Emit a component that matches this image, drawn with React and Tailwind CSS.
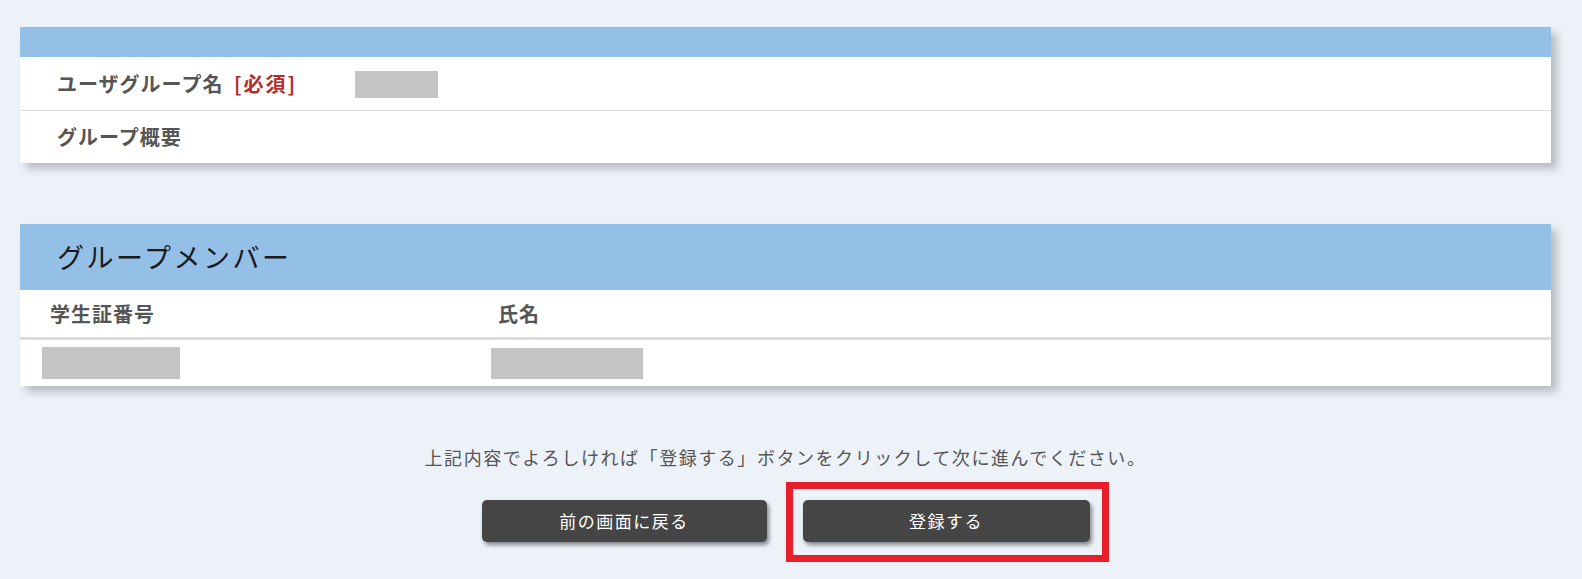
export default function App() {
  const font = { fontFamily: '"Noto Sans CJK JP", "Noto Sans", sans-serif' };

  return (
    <div className="min-h-screen bg-[#edf2f9] pt-[27px] pb-[20px]" style={font}>
      <div className="ml-[20px] w-[1531px]">
        {/* User group info */}
        <div className="bg-white shadow-[6px_6px_8px_rgba(0,0,0,0.22)]">
          <div className="h-[30px] bg-[#94c0e8]"></div>
          <div className="flex items-center h-[54px] border-b border-[#dddddd]">
            <div className="w-[335px] pl-[37px] text-[20px] font-bold tracking-[1px] text-[#555555]">
              ユーザグループ名 <span className="ml-[5px] tracking-[2px] text-[#b22d2d]">[必須]</span>
            </div>
            <div className="w-[83px] h-[27px] mt-[2px] bg-[#c4c4c4]"></div>
          </div>
          <div className="flex items-center h-[52px]">
            <div className="pl-[37px] text-[20px] font-bold tracking-[1px] text-[#555555]">
              グループ概要
            </div>
          </div>
        </div>

        {/* Group members */}
        <div className="mt-[61px] bg-white shadow-[6px_6px_8px_rgba(0,0,0,0.22)]">
          <div className="flex items-center h-[66px] bg-[#94c0e8] pl-[37px]">
            <h2 className="text-[27px] tracking-[2.5px] text-[#1a1a1a]">グループメンバー</h2>
          </div>
          <div className="grid grid-cols-[448px_1fr] h-[50px] items-center border-b-[3px] border-[#dddddd]">
            <div className="pl-[30px] text-[20px] font-bold tracking-[1px] text-[#555555]">学生証番号</div>
            <div className="pl-[30px] text-[20px] font-bold tracking-[1px] text-[#555555]">氏名</div>
          </div>
          <div className="grid grid-cols-[448px_1fr] h-[46px] items-center">
            <div className="pl-[22px]">
              <div className="w-[138px] h-[32px] bg-[#c4c4c4]"></div>
            </div>
            <div className="pl-[23px]">
              <div className="w-[152px] h-[31px] bg-[#c4c4c4]"></div>
            </div>
          </div>
        </div>

        {/* Confirm */}
        <p className="mt-[58px] text-center text-[18px] leading-[27px] tracking-[1.55px] text-[#555555]">
          上記内容でよろしければ「登録する」ボタンをクリックして次に進んでください。
        </p>

        <div className="mt-[29px] flex justify-center gap-[36px]">
          <button className="w-[285px] h-[42px] rounded-[5px] bg-[#454545] text-white text-[17px] tracking-[1.5px] shadow-[2px_3px_4px_rgba(0,0,0,0.45)]">
            前の画面に戻る
          </button>
          <div className="relative">
            <button className="w-[287px] h-[42px] rounded-[5px] bg-[#454545] text-white text-[17px] tracking-[1.5px] shadow-[2px_3px_4px_rgba(0,0,0,0.45)]">
              登録する
            </button>
            {/* highlight frame */}
            <div className="absolute -left-[17px] -right-[19px] -top-[18px] -bottom-[20px] border-[7px] border-[#e81f2a] pointer-events-none"></div>
          </div>
        </div>
      </div>
    </div>
  );
}
